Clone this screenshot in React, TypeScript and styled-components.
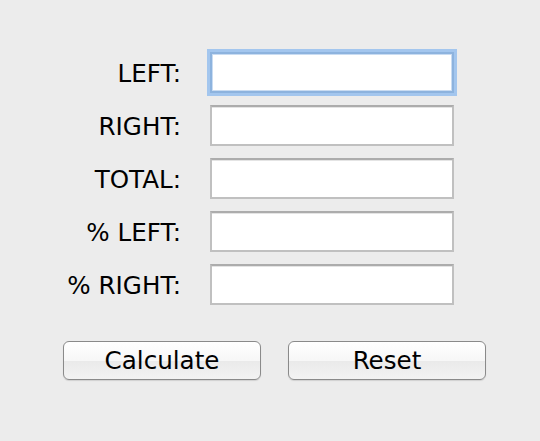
import React from "react";
import styled, { createGlobalStyle } from "styled-components";

const GlobalStyle = createGlobalStyle`
  html, body {
    margin: 0;
    padding: 0;
    background: #ececec;
  }
  body {
    font-family: "DejaVu Sans", "Liberation Sans", sans-serif;
  }
`;

const Page = styled.div`
  width: 540px;
  height: 441px;
  background: #ececec;
  box-sizing: border-box;
  padding-top: 52px;
`;

const FormGrid = styled.div`
  display: grid;
  grid-template-columns: 122px 244px;
  grid-auto-rows: 41px;
  column-gap: 29px;
  row-gap: 12px;
  padding-left: 59px;
`;

const Label = styled.label`
  display: flex;
  align-items: center;
  justify-content: flex-end;
  font-size: 24.6px;
  color: #000;
  white-space: nowrap;
  padding-top: 1px;
`;

const Field = styled.input<{ $focused?: boolean }>`
  box-sizing: border-box;
  width: 244px;
  height: 41px;
  margin: 0;
  padding: 0 6px;
  background: #fff;
  border: 2px solid #c0c0c0;
  border-top-color: #acacac;
  box-shadow: inset 0 1px 0 #e4e4e4;
  outline: none;
  font-size: 18px;
  font-family: inherit;
  ${(p) =>
    p.$focused &&
    `
    border-color: #8db3de;
    box-shadow: 0 0 0 3px #a3c6ee, inset 0 0 0 1px #c9dcf2;
  `}
`;

const ButtonRow = styled.div`
  display: flex;
  gap: 27px;
  padding-left: 63px;
  margin-top: 36px;
`;

const Button = styled.button`
  box-sizing: border-box;
  width: 198px;
  height: 39px;
  border: 1px solid #8a8a8a;
  border-radius: 6px;
  background: linear-gradient(#ffffff 0%, #f7f7f7 50%, #eaeaea 51%, #f3f3f3 100%);
  box-shadow: 0 1px 1px rgba(0, 0, 0, 0.12);
  font-family: "DejaVu Sans", "Liberation Sans", sans-serif;
  font-size: 24.6px;
  color: #000;
  padding: 0;
  display: flex;
  align-items: center;
  justify-content: center;
`;

const fields = [
  { label: "LEFT:", focused: true },
  { label: "RIGHT:" },
  { label: "TOTAL:" },
  { label: "% LEFT:" },
  { label: "% RIGHT:" },
];

export default function App() {
  return (
    <>
      <GlobalStyle />
      <Page>
        <FormGrid>
          {fields.map((f) => (
            <React.Fragment key={f.label}>
              <Label>{f.label}</Label>
              <Field $focused={f.focused} />
            </React.Fragment>
          ))}
        </FormGrid>
        <ButtonRow>
          <Button>Calculate</Button>
          <Button>Reset</Button>
        </ButtonRow>
      </Page>
    </>
  );
}
